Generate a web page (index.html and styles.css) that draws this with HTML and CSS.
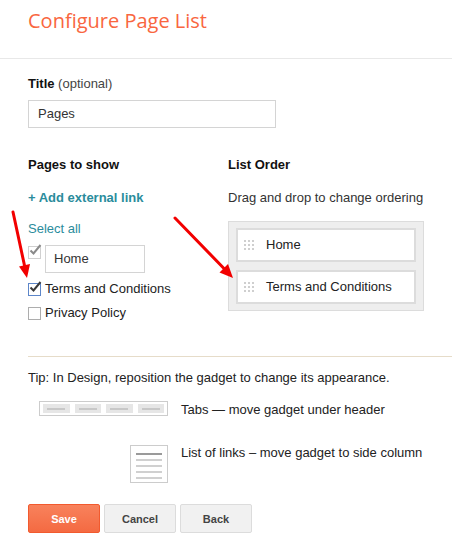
FILE: index.html
```html
<!DOCTYPE html>
<html>
<head>
<meta charset="utf-8">
<link rel="stylesheet" href="styles.css">
</head>
<body>
<div class="page">
  <header class="header"><h1 class="heading">Configure Page List</h1></header>
  <main class="content">
    <section class="field">
      <div class="label">Title <span class="opt">(optional)</span></div>
      <div class="textbox title-box">Pages</div>
    </section>
    <div class="columns">
      <div class="col col-left">
        <div class="label">Pages to show</div>
        <div class="add-link">+ Add external link</div>
        <div class="select-all">Select all</div>
        <div class="page-row row-home">
          <span class="cb cb-disabled"><svg viewBox="0 0 14 14" width="14" height="14"><path d="M2.5 6.5 L5.5 9.5 L12.5 1" fill="none" stroke="#8a8a8a" stroke-width="2"/></svg></span>
          <div class="textbox home-box">Home</div>
        </div>
        <div class="page-row">
          <span class="cb cb-checked"><svg viewBox="0 0 14 14" width="14" height="14"><path d="M2.5 6.5 L5.5 9.5 L12.5 1" fill="none" stroke="#3a3a3a" stroke-width="2"/></svg></span>
          <span class="page-name">Terms and Conditions</span>
        </div>
        <div class="page-row">
          <span class="cb"></span>
          <span class="page-name">Privacy Policy</span>
        </div>
      </div>
      <div class="col col-right">
        <div class="label">List Order</div>
        <div class="hint">Drag and drop to change ordering</div>
        <div class="order-box">
          <div class="order-item"><span class="handle"></span><span>Home</span></div>
          <div class="order-item"><span class="handle"></span><span>Terms and Conditions</span></div>
        </div>
      </div>
    </div>
    <div class="divider"></div>
    <p class="tip">Tip: In Design, reposition the gadget to change its appearance.</p>
    <div class="layouts">
      <div class="icon-cell">
        <div class="tabs-icon"><span></span><span></span><span></span><span></span></div>
      </div>
      <div class="layout-text tabs-text">Tabs — move gadget under header</div>
      <div class="icon-cell">
        <div class="list-icon"><span class="dark"></span><span></span><span></span><span></span><span></span></div>
      </div>
      <div class="layout-text">List of links – move gadget to side column</div>
    </div>
    <div class="buttons">
      <button class="btn btn-save">Save</button>
      <button class="btn">Cancel</button>
      <button class="btn">Back</button>
    </div>
  </main>
  <svg class="annot" width="452" height="539" viewBox="0 0 452 539">
    <line x1="13" y1="212" x2="24.5" y2="265.5" stroke="#f20000" stroke-width="3" stroke-linecap="round"/>
    <polygon points="27,278 30,264 19,266.5" fill="#f20000"/>
    <line x1="175" y1="218" x2="224" y2="268.5" stroke="#f20000" stroke-width="3" stroke-linecap="round"/>
    <polygon points="233,278 228,264 219.5,272.5" fill="#f20000"/>
  </svg>
</div>
</body>
</html>
```
FILE: styles.css
```css
* { box-sizing: border-box; }
html, body { margin: 0; padding: 0; background: #fff; }
body {
  font-family: "Liberation Sans", Arial, sans-serif;
  font-size: 13px;
  line-height: 16px;
  color: #222;
}
.page { position: relative; width: 452px; height: 539px; overflow: hidden; }

.header {
  padding: 7px 0 24px 28px;
  border-bottom: 1px solid #e8e8e8;
}
.heading {
  margin: 0;
  font-family: "Open Sans", sans-serif;
  font-weight: 400;
  font-size: 20px;
  line-height: 27px;
  color: #f96640;
}

.content { padding: 17px 0 0 28px; }

.label { font-weight: bold; color: #111; }
.opt { font-weight: normal; color: #444; }

.textbox {
  border: 1px solid #d4d4d4;
  background: #fff;
  color: #333;
  display: flex;
  align-items: center;
  padding-left: 9px;
}
.title-box { width: 248px; height: 28px; margin-top: 8px; }

.columns { display: flex; margin-top: 29px; }
.col-left { width: 200px; }
.col-right { width: 196px; }

.add-link { margin-top: 17px; font-weight: bold; color: #2a8c9c; }
.select-all { margin-top: 15px; color: #2a8c9c; }
.hint { margin-top: 17px; color: #333; }

.page-row { display: flex; align-items: center; gap: 4px; margin-top: 8px; }
.row-home { align-items: flex-start; }
.page-name { color: #222; }

.cb {
  position: relative;
  width: 13px;
  height: 13px;
  border: 1px solid #adadad;
  background: #fff;
  flex: none;
}
.cb svg { position: absolute; left: -1px; top: -3px; }
.cb-disabled { border-color: #d0d0d0; margin-top: 1px; }
.cb-checked { border-color: #5d86c9; }

.home-box { width: 100px; height: 28px; padding-left: 8px; }

.order-box {
  margin-top: 15px;
  border: 1px solid #dcdcdc;
  background: #eeeeee;
  padding: 6px 7px;
  display: flex;
  flex-direction: column;
  gap: 8px;
}
.order-item {
  height: 34px;
  border: 2px solid #dcdcdc;
  background: #fff;
  display: flex;
  align-items: center;
  padding-left: 5px;
  color: #222;
}
.handle {
  width: 12px;
  height: 13px;
  margin-right: 11px;
  background-image: radial-gradient(circle, #cfcfcf 0.9px, transparent 1.1px);
  background-size: 4px 4px;
}

.divider { margin-top: 35px; height: 1px; background: #e6dcc9; }
.tip { margin: 13px 0 0; color: #222; }

.layouts {
  display: grid;
  grid-template-columns: 140px auto;
  column-gap: 13px;
  row-gap: 27px;
  margin-top: 15px;
  align-items: start;
}
.icon-cell { display: flex; justify-content: flex-end; }
.layout-text { color: #222; }
.tabs-text { margin-top: 1px; }

.tabs-icon {
  width: 129px;
  height: 15px;
  border: 1px solid #cccccc;
  padding: 2px 3px;
  display: flex;
  gap: 5px;
}
.tabs-icon span {
  flex: 1;
  background: #e6e6e6 linear-gradient(#c8c8c8, #c8c8c8) no-repeat center / 18px 2px;
}

.list-icon {
  width: 38px;
  height: 38px;
  border: 1px solid #cccccc;
  padding: 7px 5px 0;
  display: flex;
  flex-direction: column;
  gap: 4px;
}
.list-icon span { height: 2px; background: #d0d0d0; }
.list-icon span.dark { background: #9a9a9a; }

.buttons { display: flex; gap: 4px; margin-top: 21px; }
.btn {
  width: 72px;
  height: 29px;
  border: 1px solid #dcdcdc;
  border-radius: 2px;
  background: #f1f1f1;
  color: #444;
  font-family: "Liberation Sans", Arial, sans-serif;
  font-size: 11px;
  font-weight: bold;
  padding: 0;
}
.btn-save {
  background: linear-gradient(#f8825c, #f46a42);
  border-color: #f25a2e;
  color: #fff;
}

.annot { position: absolute; left: 0; top: 0; pointer-events: none; }
```
